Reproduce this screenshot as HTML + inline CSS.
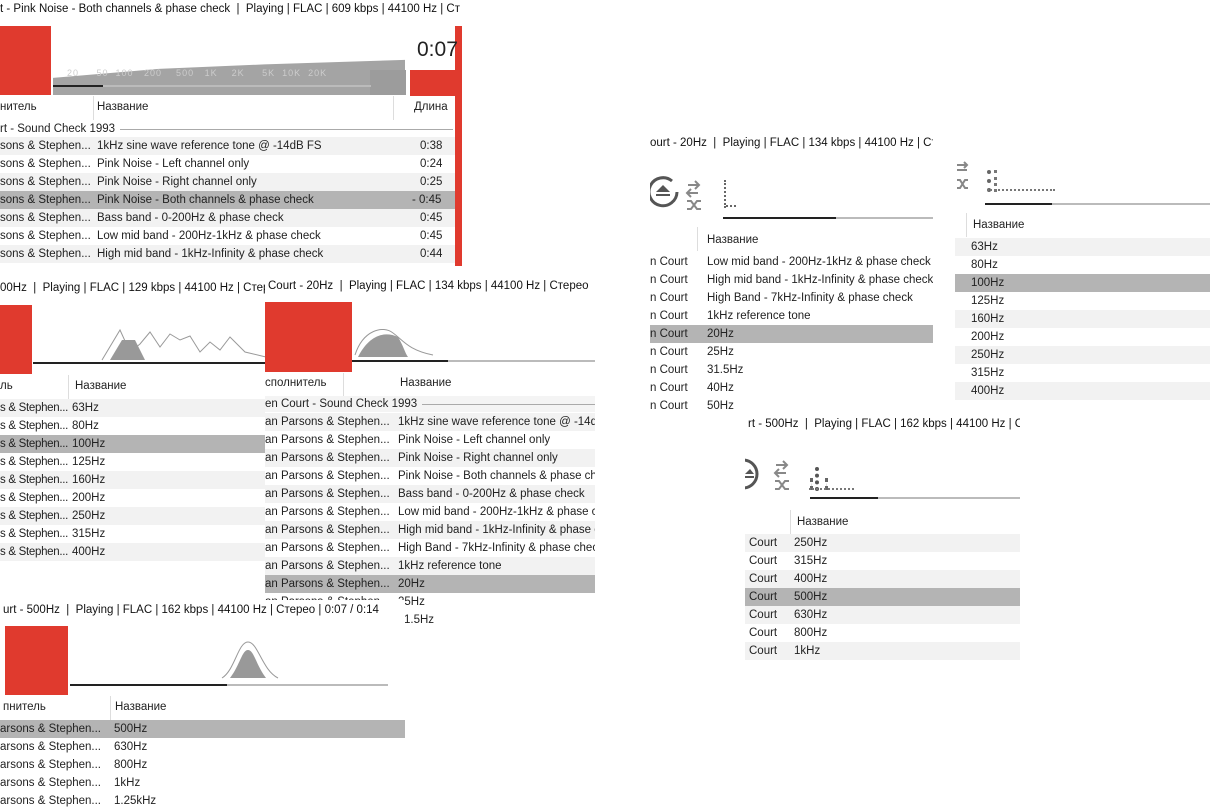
<!DOCTYPE html>
<html><head><meta charset="utf-8">
<style>
*{margin:0;padding:0;box-sizing:border-box}
body{width:1226px;height:812px;background:#fff;position:relative;overflow:hidden;font-family:"Liberation Sans",sans-serif;color:#222;font-size:11.5px}
.p{position:absolute;background:#fff;overflow:hidden}
.a{position:absolute;white-space:nowrap}
.t{position:absolute;white-space:nowrap;font-size:11.5px;color:#111}
.red{position:absolute;background:#e03a2e}
.rows{position:absolute;left:0;right:0}
.rows div{height:18px;line-height:18px;position:relative;white-space:nowrap}
.rows div:nth-child(odd){background:#f2f2f2}
.rows div.s{background:#b4b4b4}
.rows span{position:absolute;top:0}
.pb .rows span:first-child{width:68px;overflow:hidden;letter-spacing:-0.3px}
.hd{position:absolute;height:20px;line-height:20px;white-space:nowrap}
.dv{position:absolute;width:1px;background:#ddd}
.ln{position:absolute;height:2px}
.grp{position:absolute;height:16px;line-height:16px;display:flex;align-items:center;white-space:nowrap}
.grp i{flex:1;height:1px;background:#aaa;margin-left:5px}
</style></head><body>

<!-- Panel A -->
<div class="p" style="left:0;top:0;width:462px;height:266px">
<div class="t" style="left:0;top:3px">t - Pink Noise - Both channels &amp; phase check &nbsp;| &nbsp;Playing | FLAC | 609 kbps | 44100 Hz | Ст</div>
<div class="red" style="left:0;top:26px;width:51px;height:69px"></div>
<div class="red" style="left:410px;top:70px;width:52px;height:26px"></div>
<div class="red" style="left:455px;top:26px;width:7px;height:240px"></div>
<div style="position:absolute;left:53px;top:50px;width:352px;height:45px;background:#a4a4a4;clip-path:polygon(0 62%,30% 42%,60% 32%,100% 22%,100% 100%,0 100%)"></div>
<div style="position:absolute;left:370px;top:70px;width:36px;height:25px;background:#9c9c9c"></div>
<div class="a" style="left:60px;top:68px;font-size:9px;color:#ccc;letter-spacing:1px">&nbsp;&nbsp;20 &nbsp;&nbsp;&nbsp;&nbsp;50 &nbsp;100 &nbsp;&nbsp;200 &nbsp;&nbsp;&nbsp;500 &nbsp;&nbsp;1K &nbsp;&nbsp;&nbsp;2K &nbsp;&nbsp;&nbsp;&nbsp;5K &nbsp;10K &nbsp;20K</div>
<div class="ln" style="left:53px;top:85px;width:50px;background:#222"></div>
<div class="ln" style="left:103px;top:85px;width:268px;background:#bbb"></div>
<div class="a" style="left:417px;top:38px;font-size:21px;color:#222">0:07</div>
<div class="hd" style="left:0;top:97px">нитель</div>
<div class="dv" style="left:93px;top:96px;height:24px"></div>
<div class="hd" style="left:97px;top:97px">Название</div>
<div class="dv" style="left:393px;top:96px;height:24px"></div>
<div class="hd" style="left:414px;top:97px">Длина</div>
<div class="grp" style="left:0;top:121px;width:453px">rt - Sound Check 1993<i></i></div>
<div class="rows" style="top:137px;width:455px">
<div><span style="left:0">sons &amp; Stephen...</span><span style="left:97px">1kHz sine wave reference tone @ -14dB FS</span><span style="left:420px">0:38</span></div>
<div style="background:#fff"><span style="left:0">sons &amp; Stephen...</span><span style="left:97px">Pink Noise - Left channel only</span><span style="left:420px">0:24</span></div>
<div><span style="left:0">sons &amp; Stephen...</span><span style="left:97px">Pink Noise - Right channel only</span><span style="left:420px">0:25</span></div>
<div class="s"><span style="left:0">sons &amp; Stephen...</span><span style="left:97px">Pink Noise - Both channels &amp; phase check</span><span style="left:412px">- 0:45</span></div>
<div><span style="left:0">sons &amp; Stephen...</span><span style="left:97px">Bass band - 0-200Hz &amp; phase check</span><span style="left:420px">0:45</span></div>
<div style="background:#fff"><span style="left:0">sons &amp; Stephen...</span><span style="left:97px">Low mid band - 200Hz-1kHz &amp; phase check</span><span style="left:420px">0:45</span></div>
<div><span style="left:0">sons &amp; Stephen...</span><span style="left:97px">High mid band - 1kHz-Infinity &amp; phase check</span><span style="left:420px">0:44</span></div>
</div>
</div>

<!-- Panel B -->
<div class="p pb" style="left:0;top:277px;width:266px;height:295px">
<div class="t" style="left:0;top:5px">00Hz &nbsp;| &nbsp;Playing | FLAC | 129 kbps | 44100 Hz | Стерео</div>
<div class="red" style="left:0;top:28px;width:32px;height:69px"></div>
<svg style="position:absolute;left:100px;top:45px" width="166" height="40"><path d="M2 38 L20 8 L30 30 L40 22 L50 10 L60 25 L70 12 L80 18 L90 14 L100 30 L110 20 L120 28 L130 15 L145 30 L166 35" fill="none" stroke="#999"/><path d="M10 38 L22 18 L35 18 L45 38Z" fill="#999"/></svg>
<div class="ln" style="left:33px;top:85px;width:233px;background:#222"></div>
<div class="hd" style="left:0;top:99px">ль</div>
<div class="dv" style="left:68px;top:98px;height:24px"></div>
<div class="hd" style="left:75px;top:99px">Название</div>
<div class="rows" style="top:122px">
<div><span>s &amp; Stephen...</span><span style="left:72px">63Hz</span></div>
<div><span>s &amp; Stephen...</span><span style="left:72px">80Hz</span></div>
<div class="s"><span>s &amp; Stephen...</span><span style="left:72px">100Hz</span></div>
<div><span>s &amp; Stephen...</span><span style="left:72px">125Hz</span></div>
<div><span>s &amp; Stephen...</span><span style="left:72px">160Hz</span></div>
<div><span>s &amp; Stephen...</span><span style="left:72px">200Hz</span></div>
<div><span>s &amp; Stephen...</span><span style="left:72px">250Hz</span></div>
<div><span>s &amp; Stephen...</span><span style="left:72px">315Hz</span></div>
<div><span>s &amp; Stephen...</span><span style="left:72px">400Hz</span></div>
</div>
</div>

<!-- Panel C -->
<div class="p" style="left:265px;top:275px;width:330px;height:360px">
<div class="t" style="left:3px;top:5px">Court - 20Hz &nbsp;| &nbsp;Playing | FLAC | 134 kbps | 44100 Hz | Стерео</div>
<div class="red" style="left:0;top:27px;width:87px;height:70px"></div>
<svg style="position:absolute;left:88px;top:50px" width="90" height="32"><path d="M2 30 C10 5 30 0 40 8 C50 15 55 25 80 30" fill="none" stroke="#999"/><path d="M5 32 C15 12 30 5 45 12 C50 20 52 28 55 32Z" fill="#999"/></svg>
<div class="ln" style="left:87px;top:85px;width:96px;background:#222"></div>
<div class="ln" style="left:183px;top:85px;width:147px;background:#bbb"></div>
<div class="hd" style="left:0;top:98px">сполнитель</div>
<div class="dv" style="left:78px;top:98px;height:24px"></div>
<div class="hd" style="left:135px;top:98px">Название</div>
<div class="grp" style="left:0;top:121px;width:330px;background:#f4f4f4">en Court - Sound Check 1993<i></i></div>
<div class="rows" style="top:138px">
<div><span>an Parsons &amp; Stephen...</span><span style="left:133px">1kHz sine wave reference tone @ -14dB FS</span></div>
<div style="background:#fff"><span>an Parsons &amp; Stephen...</span><span style="left:133px">Pink Noise - Left channel only</span></div>
<div><span>an Parsons &amp; Stephen...</span><span style="left:133px">Pink Noise - Right channel only</span></div>
<div style="background:#fff"><span>an Parsons &amp; Stephen...</span><span style="left:133px">Pink Noise - Both channels &amp; phase check</span></div>
<div><span>an Parsons &amp; Stephen...</span><span style="left:133px">Bass band - 0-200Hz &amp; phase check</span></div>
<div style="background:#fff"><span>an Parsons &amp; Stephen...</span><span style="left:133px">Low mid band - 200Hz-1kHz &amp; phase check</span></div>
<div><span>an Parsons &amp; Stephen...</span><span style="left:133px">High mid band - 1kHz-Infinity &amp; phase check</span></div>
<div style="background:#fff"><span>an Parsons &amp; Stephen...</span><span style="left:133px">High Band - 7kHz-Infinity &amp; phase check</span></div>
<div><span>an Parsons &amp; Stephen...</span><span style="left:133px">1kHz reference tone</span></div>
<div class="s"><span>an Parsons &amp; Stephen...</span><span style="left:133px">20Hz</span></div>
<div style="background:#fff"><span>an Parsons &amp; Stephen...</span><span style="left:133px">25Hz</span></div>
<div style="background:#fff"><span style="left:139px">1.5Hz</span></div>
</div>
</div>

<!-- Panel D -->
<div class="p" style="left:0;top:600px;width:405px;height:212px">
<div class="t" style="left:3px;top:4px">urt - 500Hz &nbsp;| &nbsp;Playing | FLAC | 162 kbps | 44100 Hz | Стерео | 0:07 / 0:14</div>
<div class="red" style="left:5px;top:26px;width:63px;height:69px"></div>
<svg style="position:absolute;left:220px;top:40px" width="60" height="40"><path d="M2 38 C15 30 18 2 28 2 C38 2 42 30 58 38" fill="none" stroke="#999"/><path d="M10 38 C20 25 22 10 28 10 C34 10 36 25 46 38Z" fill="#999"/></svg>
<div class="ln" style="left:70px;top:84px;width:157px;background:#222"></div>
<div class="ln" style="left:227px;top:84px;width:161px;background:#bbb"></div>
<div class="hd" style="left:3px;top:97px">пнитель</div>
<div class="dv" style="left:110px;top:96px;height:24px"></div>
<div class="hd" style="left:115px;top:97px">Название</div>
<div class="rows" style="top:120px">
<div class="s"><span>arsons &amp; Stephen...</span><span style="left:114px">500Hz</span></div>
<div><span>arsons &amp; Stephen...</span><span style="left:114px">630Hz</span></div>
<div style="background:#fff"><span>arsons &amp; Stephen...</span><span style="left:114px">800Hz</span></div>
<div><span>arsons &amp; Stephen...</span><span style="left:114px">1kHz</span></div>
<div style="background:#fff"><span>arsons &amp; Stephen...</span><span style="left:114px">1.25kHz</span></div>
</div>
</div>

<!-- Panel E -->
<div class="p" style="left:650px;top:135px;width:283px;height:280px">
<div class="t" style="left:0;top:2px">ourt - 20Hz &nbsp;| &nbsp;Playing | FLAC | 134 kbps | 44100 Hz | Ст</div>
<svg style="position:absolute;left:0;top:40px" width="60" height="36"><path d="M22 6 A14 14 0 1 0 27 17" fill="none" stroke="#555" stroke-width="3"/><path d="M6 17 L13 10 L20 17Z" fill="#555"/><rect x="6" y="19" width="14" height="2" fill="#555"/><path d="M38 10 h10 M45 6 l4 4 -4 4 M48 18 h-10 M41 14 l-4 4 4 4" fill="none" stroke="#888" stroke-width="2"/><path d="M37 26 h4 l6 8 h4 M37 34 h4 l6 -8 h4" fill="none" stroke="#888" stroke-width="2"/></svg>
<div style="position:absolute;left:74px;top:45px;width:2px;height:28px;border-left:2px dotted #666"></div>
<div style="position:absolute;left:76px;top:70px;width:10px;height:2px;border-top:2px dotted #666"></div>
<div class="ln" style="left:73px;top:82px;width:113px;background:#222"></div>
<div class="ln" style="left:186px;top:82px;width:97px;background:#bbb"></div>
<div class="dv" style="left:47px;top:92px;height:24px"></div>
<div class="hd" style="left:57px;top:95px">Название</div>
<div class="rows" style="top:118px">
<div style="background:#fff"><span>n Court</span><span style="left:57px">Low mid band - 200Hz-1kHz &amp; phase check</span></div>
<div><span>n Court</span><span style="left:57px">High mid band - 1kHz-Infinity &amp; phase check</span></div>
<div style="background:#fff"><span>n Court</span><span style="left:57px">High Band - 7kHz-Infinity &amp; phase check</span></div>
<div><span>n Court</span><span style="left:57px">1kHz reference tone</span></div>
<div class="s"><span>n Court</span><span style="left:57px">20Hz</span></div>
<div><span>n Court</span><span style="left:57px">25Hz</span></div>
<div style="background:#fff"><span>n Court</span><span style="left:57px">31.5Hz</span></div>
<div><span>n Court</span><span style="left:57px">40Hz</span></div>
<div style="background:#fff"><span>n Court</span><span style="left:57px">50Hz</span></div>
</div>
</div>

<!-- Panel F -->
<div class="p" style="left:955px;top:155px;width:255px;height:255px">
<svg style="position:absolute;left:0;top:5px" width="20" height="32"><path d="M2 5 h10 M9 2 l3 3 -3 3 M12 10 h-10" fill="none" stroke="#888" stroke-width="2"/><path d="M2 20 h3 l5 8 h3 M2 28 h3 l5 -8 h3" fill="none" stroke="#888" stroke-width="2"/></svg>
<div style="position:absolute;left:32px;top:15px;width:10px;height:22px;border-left:4px dotted #666;border-right:3px dotted #777"></div>
<div style="position:absolute;left:32px;top:34px;width:68px;height:2px;border-top:2px dotted #777"></div>
<div class="ln" style="left:30px;top:48px;width:67px;background:#222"></div>
<div class="ln" style="left:97px;top:48px;width:158px;background:#bbb"></div>
<div class="dv" style="left:11px;top:58px;height:24px"></div>
<div class="hd" style="left:18px;top:60px">Название</div>
<div class="rows" style="top:83px">
<div><span style="left:16px">63Hz</span></div>
<div style="background:#fff"><span style="left:16px">80Hz</span></div>
<div class="s"><span style="left:16px">100Hz</span></div>
<div style="background:#fff"><span style="left:16px">125Hz</span></div>
<div><span style="left:16px">160Hz</span></div>
<div style="background:#fff"><span style="left:16px">200Hz</span></div>
<div><span style="left:16px">250Hz</span></div>
<div style="background:#fff"><span style="left:16px">315Hz</span></div>
<div><span style="left:16px">400Hz</span></div>
</div>
</div>

<!-- Panel G -->
<div class="p" style="left:745px;top:415px;width:275px;height:245px">
<div class="t" style="left:3px;top:3px">rt - 500Hz &nbsp;| &nbsp;Playing | FLAC | 162 kbps | 44100 Hz | C</div>
<svg style="position:absolute;left:0;top:42px" width="60" height="36"><path d="M-2 3 A14 14 0 0 1 -2 31" fill="none" stroke="#555" stroke-width="3"/><path d="M0 17 L5 12 L9 17Z" fill="#555"/><rect x="0" y="19" width="9" height="2" fill="#555"/><path d="M31 8 h10 M38 4 l4 4 -4 4 M41 16 h-10 M34 12 l-4 4 4 4" fill="none" stroke="#888" stroke-width="2"/><path d="M30 24 h4 l6 8 h4 M30 32 h4 l6 -8 h4" fill="none" stroke="#888" stroke-width="2"/></svg>
<div style="position:absolute;left:65px;top:63px;width:18px;height:12px;border-left:3px dotted #666;border-right:3px dotted #666"></div>
<div style="position:absolute;left:70px;top:52px;width:8px;height:24px;border-left:4px dotted #555"></div>
<div style="position:absolute;left:64px;top:73px;width:45px;height:2px;border-top:2px dotted #777"></div>
<div class="ln" style="left:65px;top:82px;width:68px;background:#222"></div>
<div class="ln" style="left:133px;top:82px;width:142px;background:#bbb"></div>
<div class="dv" style="left:45px;top:95px;height:24px"></div>
<div class="hd" style="left:52px;top:97px">Название</div>
<div class="rows" style="top:119px">
<div><span style="left:4px">Court</span><span style="left:49px">250Hz</span></div>
<div style="background:#fff"><span style="left:4px">Court</span><span style="left:49px">315Hz</span></div>
<div><span style="left:4px">Court</span><span style="left:49px">400Hz</span></div>
<div class="s"><span style="left:4px">Court</span><span style="left:49px">500Hz</span></div>
<div><span style="left:4px">Court</span><span style="left:49px">630Hz</span></div>
<div style="background:#fff"><span style="left:4px">Court</span><span style="left:49px">800Hz</span></div>
<div><span style="left:4px">Court</span><span style="left:49px">1kHz</span></div>
</div>
</div>
</body></html>
